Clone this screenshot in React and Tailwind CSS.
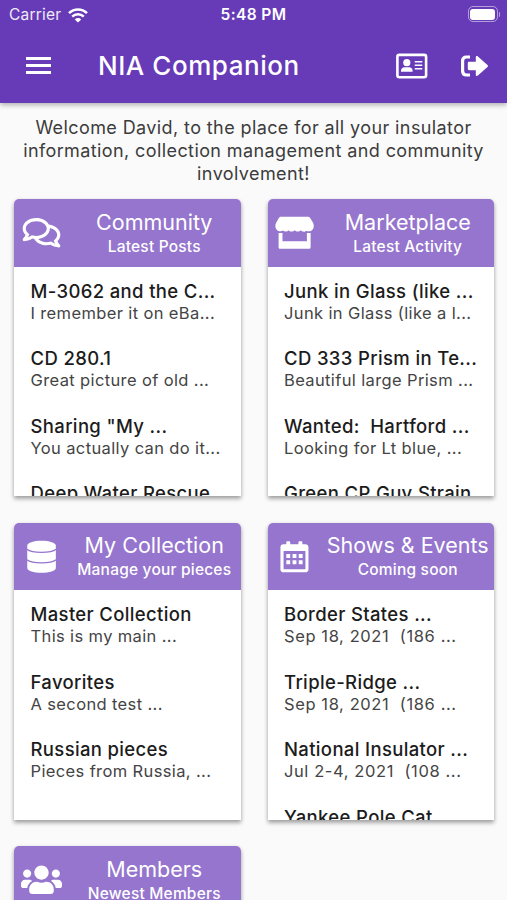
import { FaRegComments, FaUsers } from 'react-icons/fa'

function StoreIcon({ className }) {
  return (
    <svg className={className} viewBox="0 0 42 34" fill="currentColor">
      <path d="M7.5.6h27c1.2 0 2 .5 2.600 1.400l2.900 4.800c1.600 3.200.6 8-3 8.600-1.400.3-2.900.1-4.100-.5-.7 1-2.300 1.300-3.600.9-.9-.3-1.500-.7-2-1.300-.5.7-1.600 1.300-2.900 1.300s-2.500-.5-3.200-1.300c-.7.800-1.900 1.300-3.200 1.300s-2.500-.5-3.200-1.300c-.5.700-1.500 1.300-2.800 1.300-1.200 0-2.200-.4-2.800-1-1.200.7-2.500.8-3.900.6-3.700-.6-4.800-5.400-3.100-8.600L4.900 2C5.500 1.100 6.300.6 7.500.6Z" />
      <path d="M4.700 17.300h4v8.400h25v-8.400h3.800v14.500c0 1-.7 1.700-1.700 1.700H6.400c-1 0-1.700-.7-1.700-1.700Z" />
    </svg>
  )
}

function DatabaseIcon({ className }) {
  return (
    <svg className={className} viewBox="0 0 42 34" fill="none">
      <path d="M6.400 5.500C6.400 2.600 13 .5 21 .5s14.700 2.100 14.700 5v23c0 2.900-6.700 5-14.700 5s-14.600-2.100-14.600-5Z" fill="currentColor" />
      <path d="M6 9.300c5.500 4.300 24.500 4.300 30 0M6 20c5.500 4.300 24.500 4.300 30 0" stroke="#9575cd" strokeWidth="1.300" />
    </svg>
  )
}

function CalendarIcon({ className }) {
  return (
    <svg className={className} viewBox="0 0 42 34" fill="currentColor">
      <path fillRule="evenodd" d="M9.600 4.300h3V2c0-.6.400-1 1-1h2c.6 0 1 .4 1 1v2.300H25V2c0-.6.400-1 1-1h2c.6 0 1 .4 1 1v2.300h3.300c1.700 0 3 1.300 3 3V30c0 1.700-1.300 3-3 3H9.600c-1.700 0-3-1.300-3-3V7.300c0-1.700 1.300-3 3-3ZM9.800 11v18.200c0 .4.300.7.700.7h21c.4 0 .7-.3.700-.7V11Z" />
      <path d="M12.600 14.300h4v4h-4zM19 14.300h4v4h-4zM25.300 14.300h4v4h-4zM12.600 20.700h4v4h-4zM19 20.700h4v4h-4zM25.300 20.700h4v4h-4z" />
    </svg>
  )
}

const cards = [
  {
    title: 'Community',
    subtitle: 'Latest Posts',
    icon: FaRegComments,
    items: [
      ['M-3062 and the C...', 'I remember it on eBa...'],
      ['CD 280.1', 'Great picture of old ...'],
      ['Sharing "My ...', 'You actually can do it...'],
      ['Deep Water Rescue', ''],
    ],
  },
  {
    title: 'Marketplace',
    subtitle: 'Latest Activity',
    icon: StoreIcon,
    items: [
      ['Junk in Glass (like ...', 'Junk in Glass (like a l...'],
      ['CD 333 Prism in Te...', 'Beautiful large Prism ...'],
      ['Wanted:  Hartford ...', 'Looking for Lt blue, ...'],
      ['Green CP Guy Strain', ''],
    ],
  },
  {
    title: 'My Collection',
    subtitle: 'Manage your pieces',
    icon: DatabaseIcon,
    items: [
      ['Master Collection', 'This is my main ...'],
      ['Favorites', 'A second test ...'],
      ['Russian pieces', 'Pieces from Russia, ...'],
    ],
  },
  {
    title: 'Shows & Events',
    subtitle: 'Coming soon',
    icon: CalendarIcon,
    textClass: 'tracking-[0.6px]',
    items: [
      ['Border States ...', 'Sep 18, 2021  (186 ...'],
      ['Triple-Ridge ...', 'Sep 18, 2021  (186 ...'],
      ['National Insulator ...', 'Jul 2-4, 2021  (108 ...'],
      ['Yankee Pole Cat', ''],
    ],
  },
  {
    title: 'Members',
    subtitle: 'Newest Members',
    icon: FaUsers,
    items: [],
  },
]

function WifiIcon() {
  return (
    <svg className="w-[20px] h-[15px]" viewBox="0 0 20 15" fill="none" stroke="currentColor" strokeWidth="2.5">
      <path d="M1 5.2a12.8 12.8 0 0 1 18 0" />
      <path d="M4.2 8.6a8.2 8.2 0 0 1 11.6 0" />
      <path d="M10 14.6 6.8 11.4a4.6 4.6 0 0 1 6.4 0Z" fill="currentColor" stroke="none" />
    </svg>
  )
}

function StatusBar() {
  return (
    <div className="grid grid-cols-3 items-center h-[29px] px-[9px]">
      <div className="flex items-center gap-[7px] pt-px">
        <span className="text-[15.5px] tracking-[0.2px] text-white/90">Carrier</span>
        <WifiIcon />
      </div>
      <span className="pt-px text-center text-[15.5px] font-semibold tracking-[0.4px]">5:48 PM</span>
      <div className="flex items-center justify-end gap-px -mr-[2px] -mt-px">
        <div className="w-[30px] h-[16px] rounded-[5px] border border-white/50 p-[1.5px]">
          <div className="w-full h-full rounded-[3px] bg-white" />
        </div>
        <div className="w-[1.5px] h-[5px] rounded-r-full bg-white/50" />
      </div>
    </div>
  )
}

function AppBar() {
  return (
    <div className="flex items-center h-[73px] pl-[26px] pr-[18px]">
      <div className="w-[25px] flex flex-col gap-[4px]">
        <div className="h-[3px] bg-white" />
        <div className="h-[3px] bg-white" />
        <div className="h-[3px] bg-white" />
      </div>
      <h1 className="ml-[47px] text-[26px] font-medium tracking-[0.55px] whitespace-nowrap">NIA Companion</h1>
      <svg className="ml-auto w-[32px] h-[26px]" viewBox="0 0 32 26" fill="currentColor">
        <rect x="1.4" y="1.9" width="28.7" height="22.4" rx="2" fill="none" stroke="currentColor" strokeWidth="2.6" />
        <circle cx="10.8" cy="9.7" r="3.6" />
        <path d="M5 18.700v-1c0-2 1.500-3.400 3.500-3.400h4.600c2 0 3.500 1.400 3.500 3.400v1Z" />
        <path d="M18.700 7.900h7.600v1.700h-7.600zM18.700 11.400h7.600v1.700h-7.600zM18.700 14.900h7.600v1.700h-7.600z" />
      </svg>
      <svg className="ml-[32px] w-[29px] h-[24px]" viewBox="0 0 29 24" fill="currentColor">
        <path d="M10 3H6.500C4 3 2.600 4.400 2.600 6.900v10.200c0 2.500 1.400 3.900 3.900 3.900H10" fill="none" stroke="currentColor" strokeWidth="3.2" />
        <path d="M9 7.700h6.800V3.300c0-1.300 1.200-1.700 2.100-.8l9.600 8.400c.6.600.6 1.600 0 2.200l-9.600 8.400c-.9.900-2.100.5-2.100-.8v-4.400H9c-.7 0-1.200-.5-1.200-1.200V8.900c0-.7.500-1.200 1.200-1.200Z" />
      </svg>
    </div>
  )
}

function Card({ title, subtitle, icon: Icon, items, textClass = 'tracking-[0.37px]' }) {
  return (
    <div className="h-[297px] rounded-t-[5px] bg-white overflow-hidden shadow-[0_3px_4px_rgba(0,0,0,0.3),0_1px_4px_rgba(0,0,0,0.12)]">
      <div className="flex items-center h-[67.5px] bg-[#9575cd] text-white">
        <div className="w-[54px] flex justify-center shrink-0">
          <Icon className="w-[41px] h-[33.5px]" />
        </div>
        <div className="flex-1 text-center whitespace-nowrap">
          <p className="text-[21.5px] leading-[26px]">{title}</p>
          <p className="text-[15.5px] leading-[23px] font-medium tracking-[0.2px]">{subtitle}</p>
        </div>
      </div>
      <div className="pt-[13px] pl-[16.5px] flex flex-col gap-[23.5px] whitespace-pre">
        {items.map(([name, text], i) => (
          <div key={i}>
            <p className="text-[18.5px] leading-[23px] font-medium tracking-[0.35px] text-[#1c1c1c]">{name}</p>
            <p className={`text-[16.5px] leading-[21px] text-[#444] ${textClass}`}>{text}</p>
          </div>
        ))}
      </div>
    </div>
  )
}

export default function App() {
  return (
    <div className="h-[900px] w-[507px] overflow-hidden bg-[#fafafa] font-['Inter',sans-serif]">
      <header className="relative h-[103px] bg-[#673ab7] text-white shadow-[0_2px_5px_rgba(0,0,0,0.3)]">
        <StatusBar />
        <AppBar />
      </header>
      <p className="pt-[14px] text-center text-[18px] leading-[22.75px] tracking-[0.4px] text-[#3c3c3c]">
        Welcome David, to the place for all your insulator
        <br />
        information, collection management and community
        <br />
        involvement!
      </p>
      <main className="mt-[14px] pl-[14px] pr-[13px] grid grid-cols-2 gap-x-[27px] gap-y-[26.5px]">
        {cards.map((card) => (
          <Card key={card.title} {...card} />
        ))}
      </main>
    </div>
  )
}
